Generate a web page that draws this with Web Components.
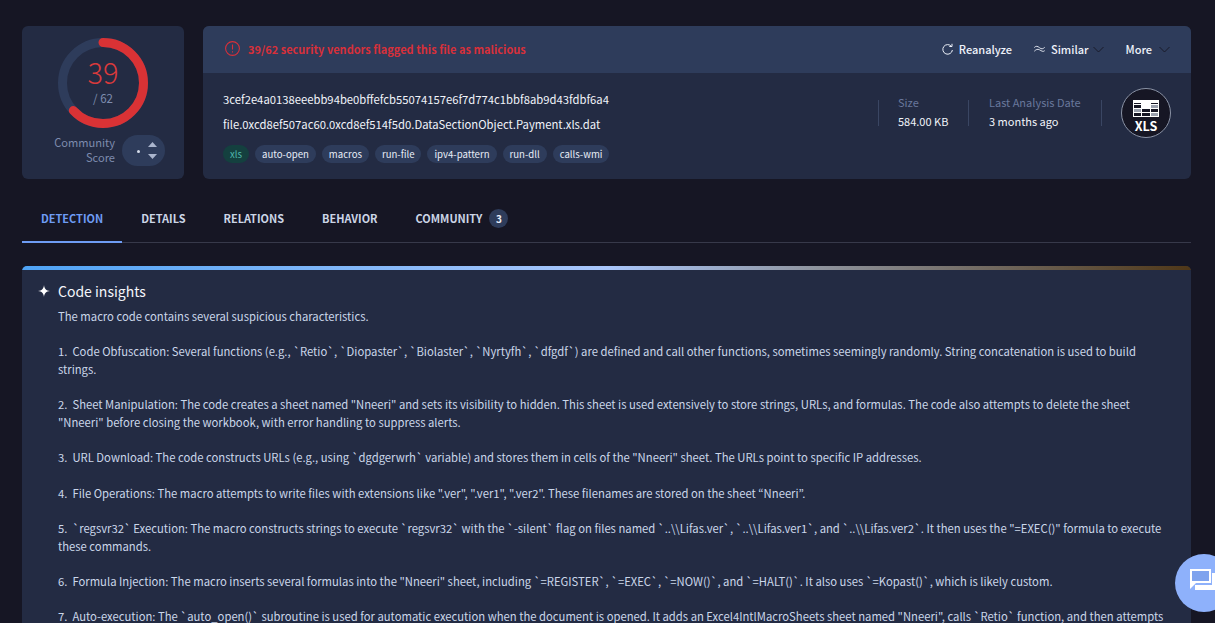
<!DOCTYPE html>
<html>
<head>
<meta charset="utf-8">
<title>Report</title>
<style>
  html, body { margin:0; height:623px; overflow:hidden; background:#161624; }
  body { font-family:"Noto Sans CJK JP","Noto Sans",sans-serif; color:#e8edf7; }
  .page { display:block; padding:26px 24px 0 22px; }
</style>
</head>
<body>
<template id="scoreTpl">
  <style>
    :host { display:flex; flex-direction:column; align-items:center; width:162px; height:153px; flex:none; box-sizing:border-box; background:#232b43; border-radius:6px; padding-top:12px; }
    .ring { position:relative; width:90px; height:90px; }
    svg { display:block; }
    .num { position:absolute; left:0; right:0; top:18px; text-align:center; color:#d93a3c; font-size:29px; line-height:30px; font-weight:300; }
    .of { position:absolute; left:0; right:0; top:52px; text-align:center; color:#7e8cae; font-size:11.5px; line-height:16px; }
    .bottom { display:flex; align-items:center; gap:7px; margin-top:7px; align-self:flex-end; margin-right:19px; }
    .lbl { color:#7e8cae; font-size:11.1px; line-height:15px; text-align:right; margin-top:-2px; }
    .pill { position:relative; width:43px; height:31px; border-radius:16px; background:#2e3c5b; }
    .dot { position:absolute; left:15px; top:15px; width:3px; height:3px; border-radius:50%; background:#d5dcea; }
    .up { position:absolute; left:26px; top:7px; }
    .down { position:absolute; left:26px; top:19px; }
  </style>
  <div class="ring">
    <svg width="90" height="90" viewBox="0 0 90 90">
      <circle cx="45" cy="45" r="40.5" fill="none" stroke="#2e3c5b" stroke-width="9"/>
      <circle cx="45" cy="45" r="40.5" fill="none" stroke="#d93235" stroke-width="9" stroke-linecap="round" stroke-dasharray="160.3 254.5" transform="rotate(-90 45 45)"/>
    </svg>
    <div class="num"><slot name="value"></slot></div>
    <div class="of"><slot name="total"></slot></div>
  </div>
  <div class="bottom">
    <div class="lbl"><slot name="label"></slot></div>
    <div class="pill">
      <div class="dot"></div>
      <svg class="up" width="9" height="5" viewBox="0 0 9 5"><path d="M4.500 0 9 5H0Z" fill="#aab5cd"/></svg>
      <svg class="down" width="9" height="5" viewBox="0 0 9 5"><path d="M0 0H9L4.500 5Z" fill="#aab5cd"/></svg>
    </div>
  </div>
</template>

<template id="tagTpl">
  <style>
    :host { display:inline-flex; align-items:center; height:18px; padding:0 7px; border-radius:9px; background:#2e3c5b; color:#e8edf7; font-size:9.6px; line-height:18px; white-space:nowrap; }
    :host([kind="file"]) { background:#14403f; color:#4fb8ac; }
  </style>
  <slot></slot>
</template>

<template id="headerTpl">
  <style>
    :host { display:block; flex:1; height:153px; background:#232b43; border-radius:6px; overflow:hidden; }
    .bar { display:flex; align-items:center; height:47px; box-sizing:border-box; background:#2e3c5b; padding:0 21px 2px 22px; }
    .alert { display:flex; align-items:center; gap:8px; color:#d7303a; font-size:11px; font-weight:700; flex:1; }
    .acts { display:flex; align-items:center; color:#eef2fa; font-size:11px; font-weight:500; }
    .act { display:flex; align-items:center; gap:6px; }
    .body { display:flex; height:106px; box-sizing:border-box; padding:18px 20px 0 20px; }
    .names { flex:1; font-size:11.27px; line-height:16px; color:#f1f4fa; }
    .names div { margin-bottom:9px; white-space:nowrap; }
    .tags { display:flex; gap:6px; margin-top:13px; }
    .meta { display:flex; align-items:flex-start; height:26px; margin-top:9px; }
    .m { border-left:1px solid #3a4663; height:26px; padding-left:19px; }
    .m .k { color:#69789c; font-size:11px; line-height:15px; margin-top:-5px; }
    .m .v { color:#f1f4fa; font-size:11px; line-height:20px; margin-top:1px; }
    .sep { border-left:1px solid #3a4663; height:26px; }
    .logo { width:50px; height:50px; box-sizing:border-box; border-radius:50%; background:#161624; border:1px solid #8b93a6; display:flex; flex-direction:column; align-items:center; margin:-12px 0 0 19px; padding-top:11px; color:#fff; font-size:12.5px; line-height:13px; font-weight:700; }
  </style>
  <div class="bar">
    <div class="alert">
      <svg width="15" height="15" viewBox="0 0 15 15" fill="none" stroke="#d7303a" stroke-width="1.1"><circle cx="7.500" cy="7.500" r="6.900"/><path d="M7.500 3.500v5M7.500 10.300v1.300"/></svg>
      <slot name="alert"></slot>
    </div>
    <div class="acts">
      <div class="act">
        <svg width="11" height="12" viewBox="0 0 11 12" fill="none" stroke="#eef2fa" stroke-width="1"><path d="M9.300 3.300A4.800 4.800 0 1 0 10.400 7"/><path d="M10 .8v2.700H7.300"/></svg>
        <slot name="a1"></slot>
      </div>
      <div class="act" style="margin-left:22px">
        <svg width="11" height="8" viewBox="0 0 11 8" fill="none" stroke="#eef2fa" stroke-width=".9"><path d="M.3 2.500C2 .8 3.500 1 5.500 2.700S9 4 10.700 2.300M.3 6.200C2 4.600 3.500 3.700 5.500 4.800S9 7.200 10.700 5.700"/></svg>
        <slot name="a2"></slot>
      </div>
      <svg style="margin-left:4px;margin-top:2px" width="11" height="7" viewBox="0 0 11 7" fill="none" stroke="#161624" stroke-width=".9"><path d="M.5 1l5 5 5-5"/></svg>
      <div class="act" style="margin-left:22px"><slot name="a3"></slot></div>
      <svg style="margin-left:7px;margin-top:2px" width="11" height="7" viewBox="0 0 11 7" fill="none" stroke="#161624" stroke-width=".9"><path d="M.5 1l5 5 5-5"/></svg>
    </div>
  </div>
  <div class="body">
    <div class="names">
      <div><slot name="hash"></slot></div>
      <div><slot name="file"></slot></div>
      <div class="tags"><slot name="tag"></slot></div>
    </div>
    <div class="meta">
      <div class="m" style="width:70px"><div class="k">Size</div><div class="v">584.00 KB</div></div>
      <div class="m" style="width:112px;padding-left:20px"><div class="k">Last Analysis Date</div><div class="v">3 months ago</div></div>
      <div class="sep"></div>
      <div class="logo">
        <svg width="26" height="17" viewBox="0 0 26 17" style="display:block"><rect x=".5" y=".5" width="25" height="16" fill="#161624" stroke="#fff"/><path d="M0 4.500h26M0 8.500h26M0 12.500h26M8.500 0v17M17.500 0v17" stroke="#fff" fill="none"/><rect x="0" y="0" width="26" height="3" fill="#fff"/><rect x="9" y="1" width="8" height="7" fill="#fff"/><rect x="1" y="9" width="7" height="3" fill="#9aa0ad"/><rect x="18" y="5" width="7" height="3" fill="#9aa0ad"/><rect x="18" y="13" width="7" height="3" fill="#9aa0ad"/></svg>
        <span style="margin-top:2px">XLS</span>
      </div>
    </div>
  </div>
</template>

<template id="tabsTpl">
  <style>
    :host { display:flex; height:45px; margin-top:18px; border-bottom:1px solid #37394a; font-size:10.95px; font-weight:700; color:#ccd5e6; }
  </style>
  <slot></slot>
</template>

<template id="tabTpl">
  <style>
    :host { display:flex; align-items:center; gap:7px; height:45px; padding:0 19px 3px; box-sizing:border-box; white-space:nowrap; }
    :host([active]) { color:#6e9cf4; box-shadow:inset 0 -2px 0 #6e9cf4; height:46px; padding-bottom:4px; }
  </style>
  <slot></slot>
</template>

<template id="countTpl">
  <style>
    :host { display:inline-flex; align-items:center; justify-content:center; width:19px; height:19px; border-radius:50%; background:#2e3c5b; color:#e8edf7; font-size:10px; }
  </style>
  <slot></slot>
</template>

<template id="cardTpl">
  <style>
    :host { display:block; margin-top:23px; background:#232b43; border-radius:5px 5px 0 0; overflow:hidden; }
    .strip { height:4px; background:linear-gradient(90deg,#4fa3f5 0%,#a9c6fb 50%,#8f949e 68%,#4f3718 100%); }
    .head { display:flex; align-items:center; gap:8px; margin:11px 0 0 16px; color:#f4f6fb; font-size:14px; line-height:20px; }
    .txt { margin:7px 20px 0 36px; color:#cbd7ea; font-size:11.27px; line-height:17.65px; }
  </style>
  <div class="strip"></div>
  <div class="head">
    <svg width="12" height="12" viewBox="0 0 12 12"><path d="M6 0C6.500 4 8 5.500 12 6 8 6.500 6.500 8 6 12 5.500 8 4 6.500 0 6 4 5.500 5.500 4 6 0Z" fill="#fff"/></svg>
    <slot name="title"></slot>
  </div>
  <div class="txt"><slot></slot></div>
</template>

<template id="chatTpl">
  <style>
    :host { position:fixed; left:1175px; top:554px; width:58px; height:58px; border-radius:50%; background:#8eb1fb; display:block; }
    svg { position:absolute; left:15px; top:15px; }
  </style>
  <svg width="30" height="22" viewBox="0 0 30 22"><path d="M0 0H21V14H6L0 20Z" fill="#fff"/><rect x="2" y="2" width="17" height="10" fill="#7fa3ee"/><path d="M22 4H25V21H5V16H22Z" fill="#fff"/></svg>
</template>

<vt-page class="page">
  <vt-top style="display:flex;gap:19px">
    <vt-score>
      <span slot="value">39</span>
      <span slot="total">/ 62</span>
      <span slot="label">Community<br>Score</span>
    </vt-score>
    <vt-header>
      <span slot="alert">39/62 security vendors flagged this file as malicious</span>
      <span slot="a1">Reanalyze</span>
      <span slot="a2">Similar</span>
      <span slot="a3">More</span>
      <span slot="hash">3cef2e4a0138eeebb94be0bffefcb55074157e6f7d774c1bbf8ab9d43fdbf6a4</span>
      <span slot="file">file.0xcd8ef507ac60.0xcd8ef514f5d0.DataSectionObject.Payment.xls.dat</span>
      <vt-tag slot="tag" kind="file">xls</vt-tag>
      <vt-tag slot="tag">auto-open</vt-tag>
      <vt-tag slot="tag">macros</vt-tag>
      <vt-tag slot="tag">run-file</vt-tag>
      <vt-tag slot="tag">ipv4-pattern</vt-tag>
      <vt-tag slot="tag">run-dll</vt-tag>
      <vt-tag slot="tag">calls-wmi</vt-tag>
    </vt-header>
  </vt-top>
  <vt-tabs>
    <vt-tab active>DETECTION</vt-tab>
    <vt-tab>DETAILS</vt-tab>
    <vt-tab>RELATIONS</vt-tab>
    <vt-tab>BEHAVIOR</vt-tab>
    <vt-tab>COMMUNITY <vt-count>3</vt-count></vt-tab>
  </vt-tabs>
  <vt-card>
    <span slot="title">Code insights</span>
    The macro code contains several suspicious characteristics.<br><br>
    1.&nbsp; Code Obfuscation: Several functions (e.g., `Retio`, `Diopaster`, `Biolaster`, `Nyrtyfh`, `dfgdf`) are defined and call other functions, sometimes seemingly randomly. String concatenation is used to build strings.<br><br>
    2.&nbsp; Sheet Manipulation: The code creates a sheet named "Nneeri" and sets its visibility to hidden. This sheet is used extensively to store strings, URLs, and formulas. The code also attempts to delete the sheet "Nneeri" before closing the workbook, with error handling to suppress alerts.<br><br>
    3.&nbsp; URL Download: The code constructs URLs (e.g., using `dgdgerwrh` variable) and stores them in cells of the "Nneeri" sheet. The URLs point to specific IP addresses.<br><br>
    4.&nbsp; File Operations: The macro attempts to write files with extensions like ".ver", ".ver1", ".ver2". These filenames are stored on the sheet “Nneeri”.<br><br>
    5.&nbsp; `regsvr32` Execution: The macro constructs strings to execute `regsvr32` with the `-silent` flag on files named `..\\Lifas.ver`, `..\\Lifas.ver1`, and `..\\Lifas.ver2`. It then uses the "=EXEC()" formula to execute these commands.<br><br>
    6.&nbsp; Formula Injection: The macro inserts several formulas into the "Nneeri" sheet, including `=REGISTER`, `=EXEC`, `=NOW()`, and `=HALT()`. It also uses `=Kopast()`, which is likely custom.<br><br>
    7.&nbsp; Auto-execution: The `auto_open()` subroutine is used for automatic execution when the document is opened. It adds an Excel4IntlMacroSheets sheet named "Nneeri", calls `Retio` function, and then attempts
  </vt-card>
</vt-page>
<vt-chat></vt-chat>
<script>
// petit helper: chaque element clone son template dans un shadow root ouvert
function register(tag, tplId) {
  customElements.define(tag, class extends HTMLElement {
    constructor() {
      super();
      this.attachShadow({ mode: 'open' });
      if (tplId) this.shadowRoot.appendChild(document.getElementById(tplId).content.cloneNode(true));
      else this.shadowRoot.innerHTML = '<style>:host{display:block}</style><slot></slot>';
    }
  });
}
register('vt-page');
register('vt-top');
register('vt-score', 'scoreTpl');
register('vt-header', 'headerTpl');
register('vt-tag', 'tagTpl');
register('vt-tabs', 'tabsTpl');
register('vt-tab', 'tabTpl');
register('vt-count', 'countTpl');
register('vt-card', 'cardTpl');
register('vt-chat', 'chatTpl');
</script>
</body>
</html>
